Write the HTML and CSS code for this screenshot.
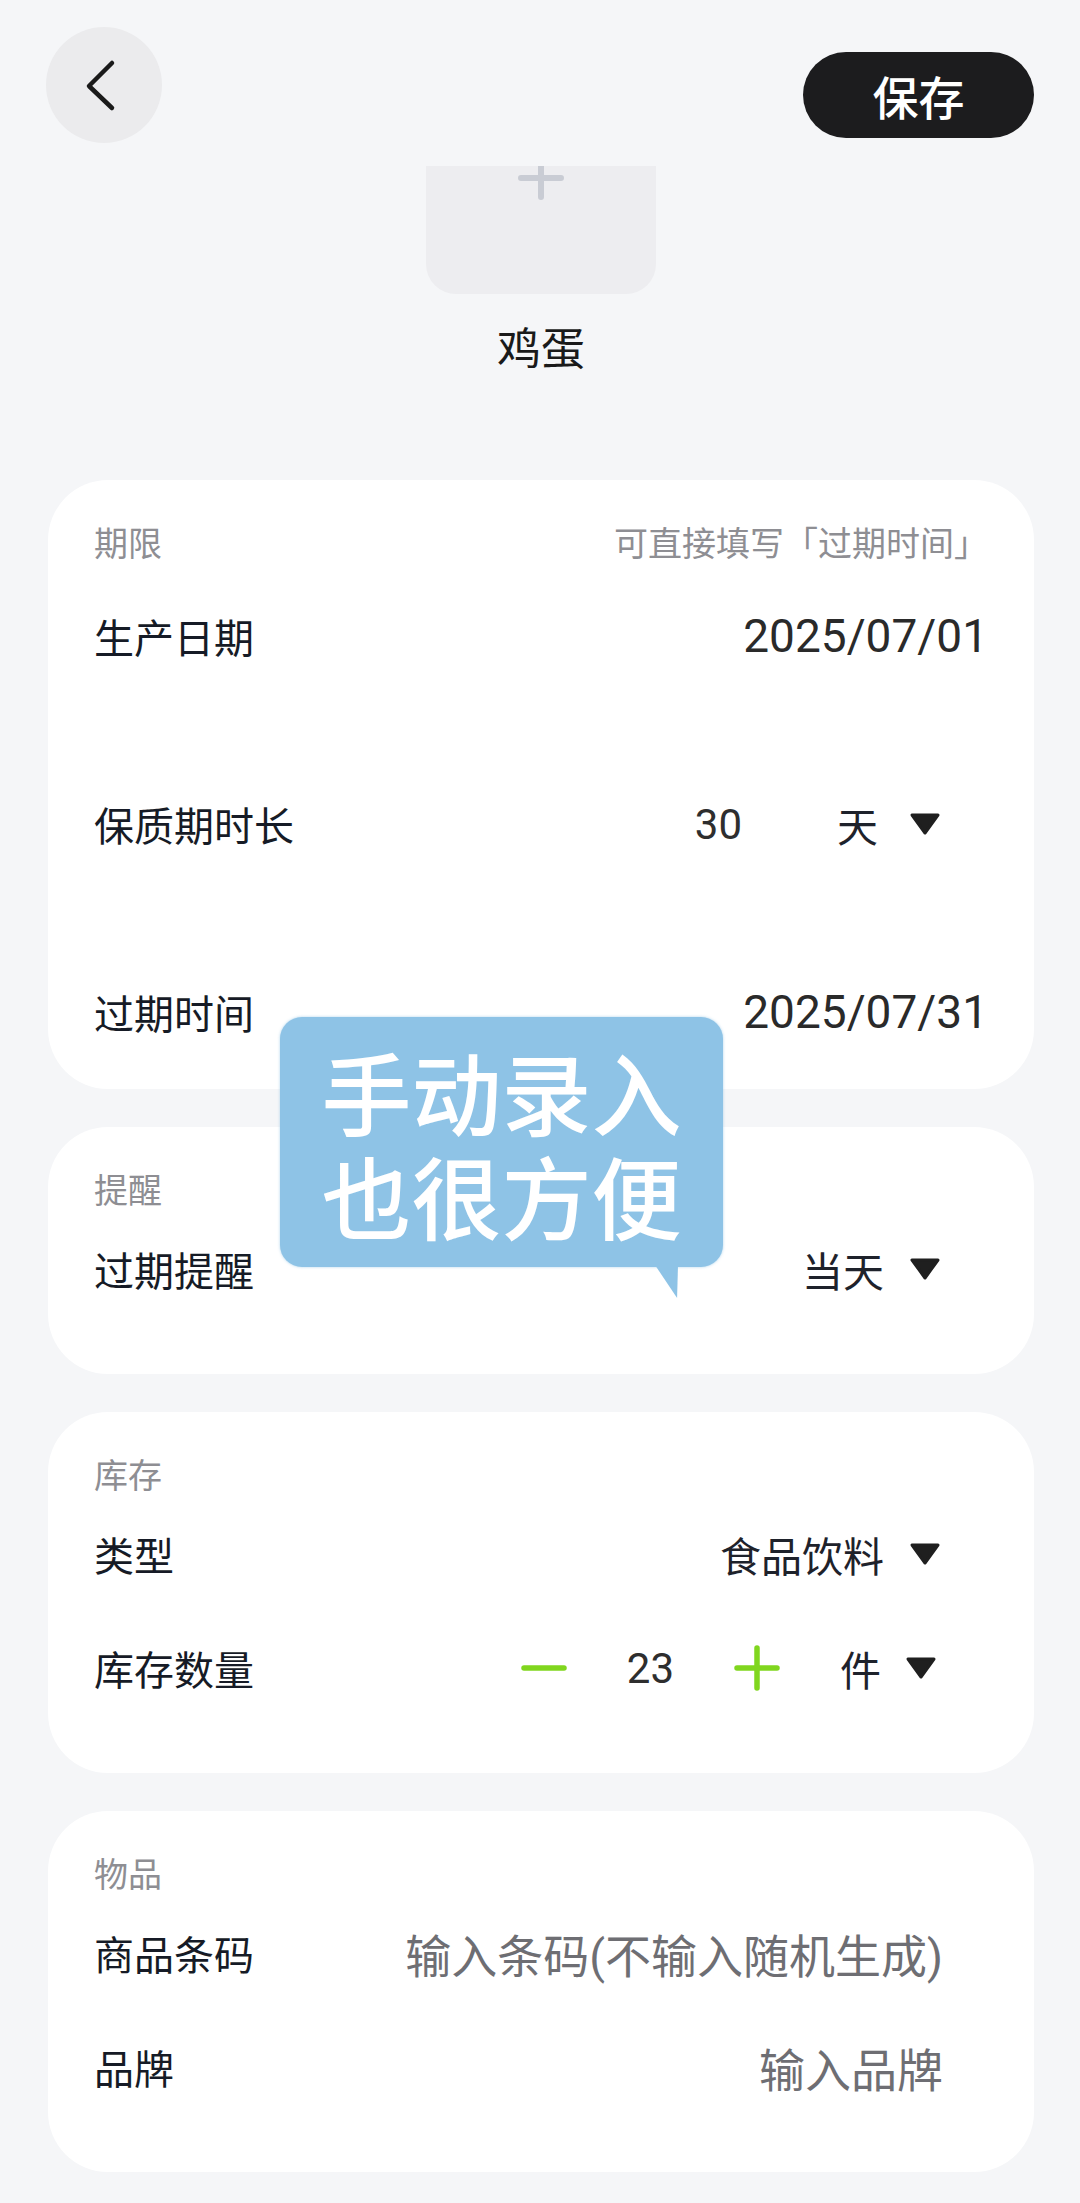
FILE: index.html
```html
<!DOCTYPE html>
<html lang="zh-CN">
<head>
    <meta charset="UTF-8">
    <meta name="viewport" content="width=device-width, initial-scale=1.0">
    <title>编辑物品</title>
    <link rel="stylesheet" href="styles.css">
</head>
<body>

<div class="page">
    <div class="topbar">
        <button class="back-btn">
            <svg width="116" height="116" viewBox="0 0 116 116">
                <path d="M66 36 L43 59 L66 81" fill="none" stroke="#1a1a1a" stroke-width="4.5" stroke-linecap="round" stroke-linejoin="round"/>
            </svg>
        </button>
        <button class="save-btn">保存</button>
    </div>

    <div class="item-head">
        <div class="photo-box">
            <svg width="46" height="34" viewBox="0 0 46 34">
                <path d="M3 12 H43 M23 0 V31" stroke="#c9ccd4" stroke-width="6" stroke-linecap="round"/>
            </svg>
        </div>
        <div class="item-name">鸡蛋</div>
    </div>

    <div class="card period">
        <div class="card-head">
            <span>期限</span>
            <span>可直接填写「过期时间」</span>
        </div>
        <div class="row">
            <span class="label">生产日期</span>
            <span class="date">2025/07/01</span>
        </div>
        <div class="row">
            <span class="label">保质期时长</span>
            <div class="duration">
                <span class="num">30</span>
                <span class="select wide">天
                    <svg width="32" height="24" viewBox="0 0 32 24"><path d="M3 3 H29 L16 21 Z" fill="#1f1f1f" stroke="#1f1f1f" stroke-width="3" stroke-linejoin="round"/></svg>
                </span>
            </div>
        </div>
        <div class="row">
            <span class="label">过期时间</span>
            <span class="date">2025/07/31</span>
        </div>
    </div>

    <div class="card">
        <div class="card-head"><span>提醒</span></div>
        <div class="row">
            <span class="label">过期提醒</span>
            <span class="select">当天
                <svg width="32" height="24" viewBox="0 0 32 24"><path d="M3 3 H29 L16 21 Z" fill="#1f1f1f" stroke="#1f1f1f" stroke-width="3" stroke-linejoin="round"/></svg>
            </span>
        </div>
    </div>

    <div class="card">
        <div class="card-head"><span>库存</span></div>
        <div class="row">
            <span class="label">类型</span>
            <span class="select">食品饮料
                <svg width="32" height="24" viewBox="0 0 32 24"><path d="M3 3 H29 L16 21 Z" fill="#1f1f1f" stroke="#1f1f1f" stroke-width="3" stroke-linejoin="round"/></svg>
            </span>
        </div>
        <div class="row">
            <span class="label">库存数量</span>
            <div class="stepper">
                <svg width="46" height="46" viewBox="0 0 46 46"><path d="M3 23 H43" stroke="#80d61e" stroke-width="5.5" stroke-linecap="round"/></svg>
                <span class="num">23</span>
                <svg width="46" height="46" viewBox="0 0 46 46"><path d="M3 23 H43 M23 3 V43" stroke="#80d61e" stroke-width="5.5" stroke-linecap="round"/></svg>
                <span class="select">件
                    <svg width="32" height="24" viewBox="0 0 32 24"><path d="M3 3 H29 L16 21 Z" fill="#1f1f1f" stroke="#1f1f1f" stroke-width="3" stroke-linejoin="round"/></svg>
                </span>
            </div>
        </div>
    </div>

    <div class="card">
        <div class="card-head"><span>物品</span></div>
        <div class="row">
            <span class="label">商品条码</span>
            <span class="placeholder">输入条码(不输入随机生成)</span>
        </div>
        <div class="row">
            <span class="label">品牌</span>
            <span class="placeholder">输入品牌</span>
        </div>
    </div>

    <div class="bubble">手动录入<br>也很方便</div>
</div>

</body>
</html>
```

FILE: styles.css
```css
body {
    margin: 0;
    background-color: #f5f6f8;
    font-family: Roboto, "Noto Sans CJK SC", sans-serif;
    color: #161b26;
}

.page {
    position: relative;
    padding: 0 46px 40px 48px;
}

.topbar {
    display: flex;
    justify-content: space-between;
    align-items: flex-start;
    height: 166px;
    box-sizing: border-box;
    padding-top: 27px;
    margin-left: -2px;
}

.back-btn {
    width: 116px;
    height: 116px;
    padding: 0;
    border: none;
    border-radius: 50%;
    background-color: #ebebed;
}

.back-btn svg {
    display: block;
}

.save-btn {
    margin-top: 25px;
    width: 231px;
    height: 86px;
    border: none;
    border-radius: 43px;
    background-color: #1c1c1e;
    color: #fff;
    font-family: "Noto Sans CJK SC", sans-serif;
    font-size: 46px;
    font-weight: 500;
}

.item-head {
    display: flex;
    flex-direction: column;
    align-items: center;
}

.photo-box {
    width: 230px;
    height: 128px;
    background-color: #ededf0;
    border-radius: 0 0 30px 30px;
    display: flex;
    justify-content: center;
}

.item-name {
    margin-top: 26px;
    font-size: 44px;
    line-height: 60px;
    color: #1a1a1a;
}

.card {
    margin-top: 38px;
    background-color: #fff;
    border-radius: 60px;
    padding: 40px 46px 48px 46px;
}

.card.period {
    margin-top: 100px;
    padding-bottom: 20px;
}

.card-head {
    display: flex;
    justify-content: space-between;
    height: 48px;
    line-height: 48px;
    margin-bottom: -3px;
    font-size: 34px;
    color: #8e8e93;
}

.row {
    display: flex;
    justify-content: space-between;
    align-items: center;
    height: 114px;
}

.period .row {
    margin-top: 74px;
}

.period .row:nth-child(2) {
    margin-top: 14px;
}

.label {
    font-size: 40px;
}

.date {
    font-size: 46px;
    color: #2a2a2a;
}

.num {
    font-size: 42px;
    color: #2e2e2e;
}

.select {
    display: flex;
    align-items: center;
    gap: 25px;
    margin-right: 47px;
    font-size: 41px;
    color: #1e222b;
}

.select svg {
    display: block;
}

.select.wide {
    gap: 31px;
}

.duration {
    display: flex;
    align-items: center;
    gap: 95px;
}

.stepper {
    display: flex;
    align-items: center;
    gap: 60px;
}

.stepper .select {
    gap: 24px;
    margin-right: 51px;
}

.stepper svg {
    display: block;
}

.placeholder {
    margin-right: 45px;
    font-size: 46px;
    color: #6e6e73;
}

.bubble {
    position: absolute;
    left: 280px;
    top: 1017px;
    width: 443px;
    height: 250px;
    box-sizing: border-box;
    padding-top: 21px;
    border-radius: 22px;
    background-color: #8ec3e6;
    box-shadow: 0 0 3px rgba(142, 195, 230, 0.7);
    color: #fff;
    font-family: "Noto Sans CJK SC", sans-serif;
    font-size: 90px;
    font-weight: 500;
    line-height: 104px;
    text-align: center;
}

.bubble::after {
    content: "";
    position: absolute;
    left: 375px;
    top: 248px;
    width: 23px;
    height: 33px;
    background-color: #8ec3e6;
    clip-path: polygon(0 0, 100% 0, 96% 100%);
}
```
